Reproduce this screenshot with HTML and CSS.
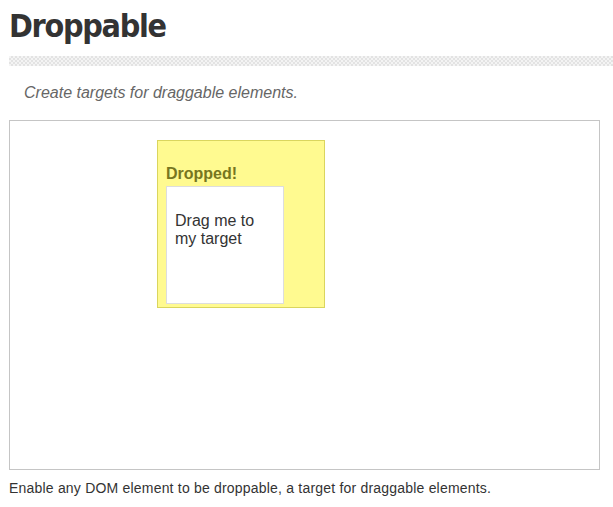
FILE: index.html
```html
<!DOCTYPE html>
<html>
<head>
<meta charset="utf-8">
<link rel="stylesheet" href="styles.css">
</head>
<body>
<div class="page">
  <h1 class="title">Droppable</h1>
  <div class="stripe"></div>
  <p class="desc">Create targets for draggable elements.</p>
  <div class="demo">
    <div class="droppable">
      <p class="drop-label">Dropped!</p>
      <div class="draggable">
        <p class="drag-text">Drag me to my target</p>
      </div>
    </div>
  </div>
  <p class="footer">Enable any DOM element to be droppable, a target for draggable elements.</p>
</div>
</body>
</html>
```
FILE: styles.css
```css
html, body {
  margin: 0;
  padding: 0;
  background: #fff;
}
.page {
  padding-left: 9px;
  font-family: "Liberation Sans", Arial, sans-serif;
  color: #333;
}
.title {
  margin: 0;
  padding-top: 6px;
  height: 44px;
  font-family: "DejaVu Sans Condensed", "DejaVu Sans", sans-serif;
  font-weight: bold;
  font-size: 32px;
  line-height: 40px;
  color: #333;
  letter-spacing: -1.3px;
}
.stripe {
  margin-top: 6px;
  height: 10px;
  background-color: #f2f2f2;
  background-image: repeating-conic-gradient(#e3e3e3 0 25%, #f4f4f4 0 50%);
  background-size: 4px 4px;
}
.desc {
  margin: 0;
  padding: 18px 0 0 15px;
  height: 36px;
  font-size: 16px;
  line-height: 18px;
  font-style: italic;
  color: #666;
}
.demo {
  box-sizing: border-box;
  width: 591px;
  height: 350px;
  border: 1px solid #c5c5c5;
  padding: 19px 0 0 147px;
}
.droppable {
  box-sizing: border-box;
  width: 168px;
  height: 168px;
  border: 1px solid #dad55e;
  background: #fffa90;
  padding: 8px;
  display: flex;
  flex-direction: column;
  align-items: flex-start;
}
.drop-label {
  margin: 16px 0 3px;
  font-weight: bold;
  font-size: 16px;
  line-height: 18px;
  color: #777620;
}
.draggable {
  box-sizing: border-box;
  flex-shrink: 0;
  width: 118px;
  height: 118px;
  border: 1px solid #dddddd;
  background: #fff;
  padding: 8px;
}
.drag-text {
  margin: 17px 0 0;
  font-size: 16px;
  line-height: 18px;
  color: #333;
}
.footer {
  margin: 0;
  padding-top: 10px;
  font-size: 14px;
  line-height: 16px;
  letter-spacing: 0.2px;
  color: #333;
}
```
